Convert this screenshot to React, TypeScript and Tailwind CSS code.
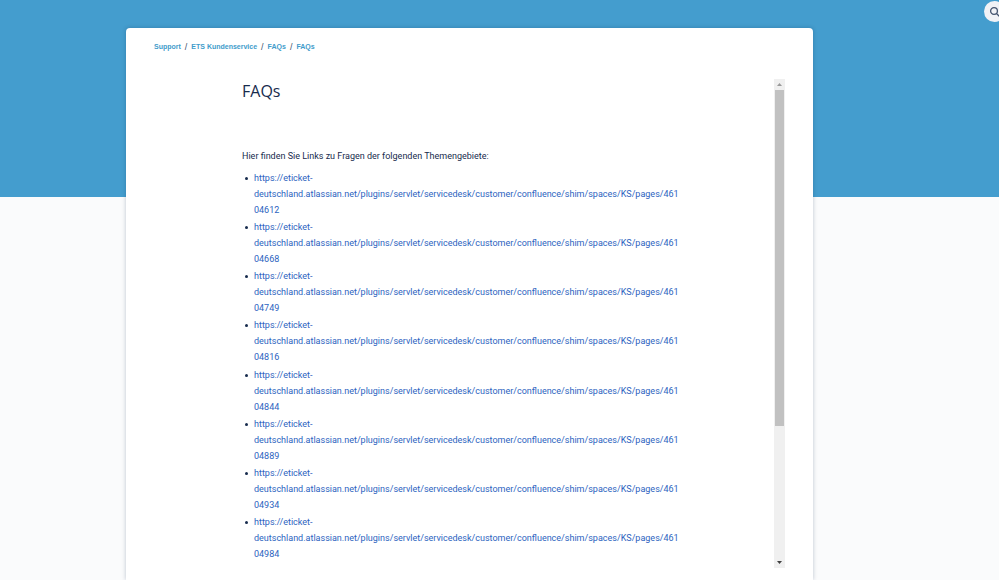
import { Fragment } from 'react';

const breadcrumbs = ['Support', 'ETS Kundenservice', 'FAQs', 'FAQs'];

const pageIds = [
  '46104612',
  '46104668',
  '46104749',
  '46104816',
  '46104844',
  '46104889',
  '46104934',
  '46104984',
];

const baseUrl =
  'https://eticket-deutschland.atlassian.net/plugins/servlet/servicedesk/customer/confluence/shim/spaces/KS/pages/';

function SearchButton() {
  return (
    <button
      type="button"
      aria-label="Suche"
      className="absolute -right-1.5 top-px flex h-[21px] w-[21px] items-center justify-center rounded-full bg-[#f1f2f6]"
    >
      <svg
        viewBox="0 0 12 12"
        className="h-3 w-3 text-[#44546f]"
        fill="none"
        stroke="currentColor"
        strokeWidth="1.3"
        strokeLinecap="round"
      >
        <circle cx="5" cy="5" r="3.4" />
        <path d="M7.6 7.6 L10 10" />
      </svg>
    </button>
  );
}

function Breadcrumbs() {
  return (
    <nav className="flex gap-1 font-['Liberation_Sans',sans-serif] text-[7px] font-bold leading-3 text-[#3f9ccb]">
      {breadcrumbs.map((label, index) => (
        <Fragment key={index}>
          {index > 0 && (
            <span className="text-[9px] font-normal text-[#42526e]">/</span>
          )}
          <a href="#">{label}</a>
        </Fragment>
      ))}
    </nav>
  );
}

function Scrollbar() {
  return (
    <div
      aria-hidden="true"
      className="flex w-[11px] shrink-0 flex-col items-center bg-[#f0f0f0]"
    >
      <svg viewBox="0 0 11 11" className="h-[11px] w-[11px] shrink-0">
        <path d="M3 7 L5.5 4 L8 7 Z" fill="#9a9a9a" />
      </svg>
      <div className="w-full flex-1 px-px">
        <div className="h-[72%] bg-[#c1c1c1]" />
      </div>
      <svg viewBox="0 0 11 11" className="h-[11px] w-[11px] shrink-0">
        <path d="M3 4 L5.5 7 L8 4 Z" fill="#404040" />
      </svg>
    </div>
  );
}

export default function App() {
  return (
    <div className="flex min-h-screen flex-col overflow-hidden bg-[#fafbfc] font-['Roboto',sans-serif] text-[9px] text-[#172b4d]">
      <header className="relative h-[197px] shrink-0 bg-[#449dce]">
        <SearchButton />
      </header>
      <main className="relative -mt-[169px] ml-[126px] mr-[186px] flex flex-1 flex-col rounded-t-sm bg-white px-7 pb-3 pt-[13px] shadow-[0_0_4px_rgba(9,30,66,0.25)]">
        <Breadcrumbs />
        <div className="mt-[26px] flex flex-1">
          <article className="flex min-w-0 flex-1 flex-col pb-1.5 pl-[88px] pr-[92px]">
            <h1 className="font-['Open_Sans',sans-serif] text-base leading-6">
              FAQs
            </h1>
            <p className="mt-[45px] leading-4">
              Hier finden Sie Links zu Fragen der folgenden Themengebiete:
            </p>
            <ul className="mt-1.5 flex flex-1 flex-col justify-between leading-4">
              {pageIds.map((id) => (
                <li key={id} className="flex gap-1.5 pl-[3px]">
                  <span className="mt-[7px] h-[3px] w-[3px] shrink-0 rounded-full bg-[#172b4d]" />
                  <a
                    href={baseUrl + id}
                    className="min-w-0 break-words text-[#2c63c0]"
                  >
                    {baseUrl + id}
                  </a>
                </li>
              ))}
            </ul>
          </article>
          <Scrollbar />
        </div>
      </main>
    </div>
  );
}
